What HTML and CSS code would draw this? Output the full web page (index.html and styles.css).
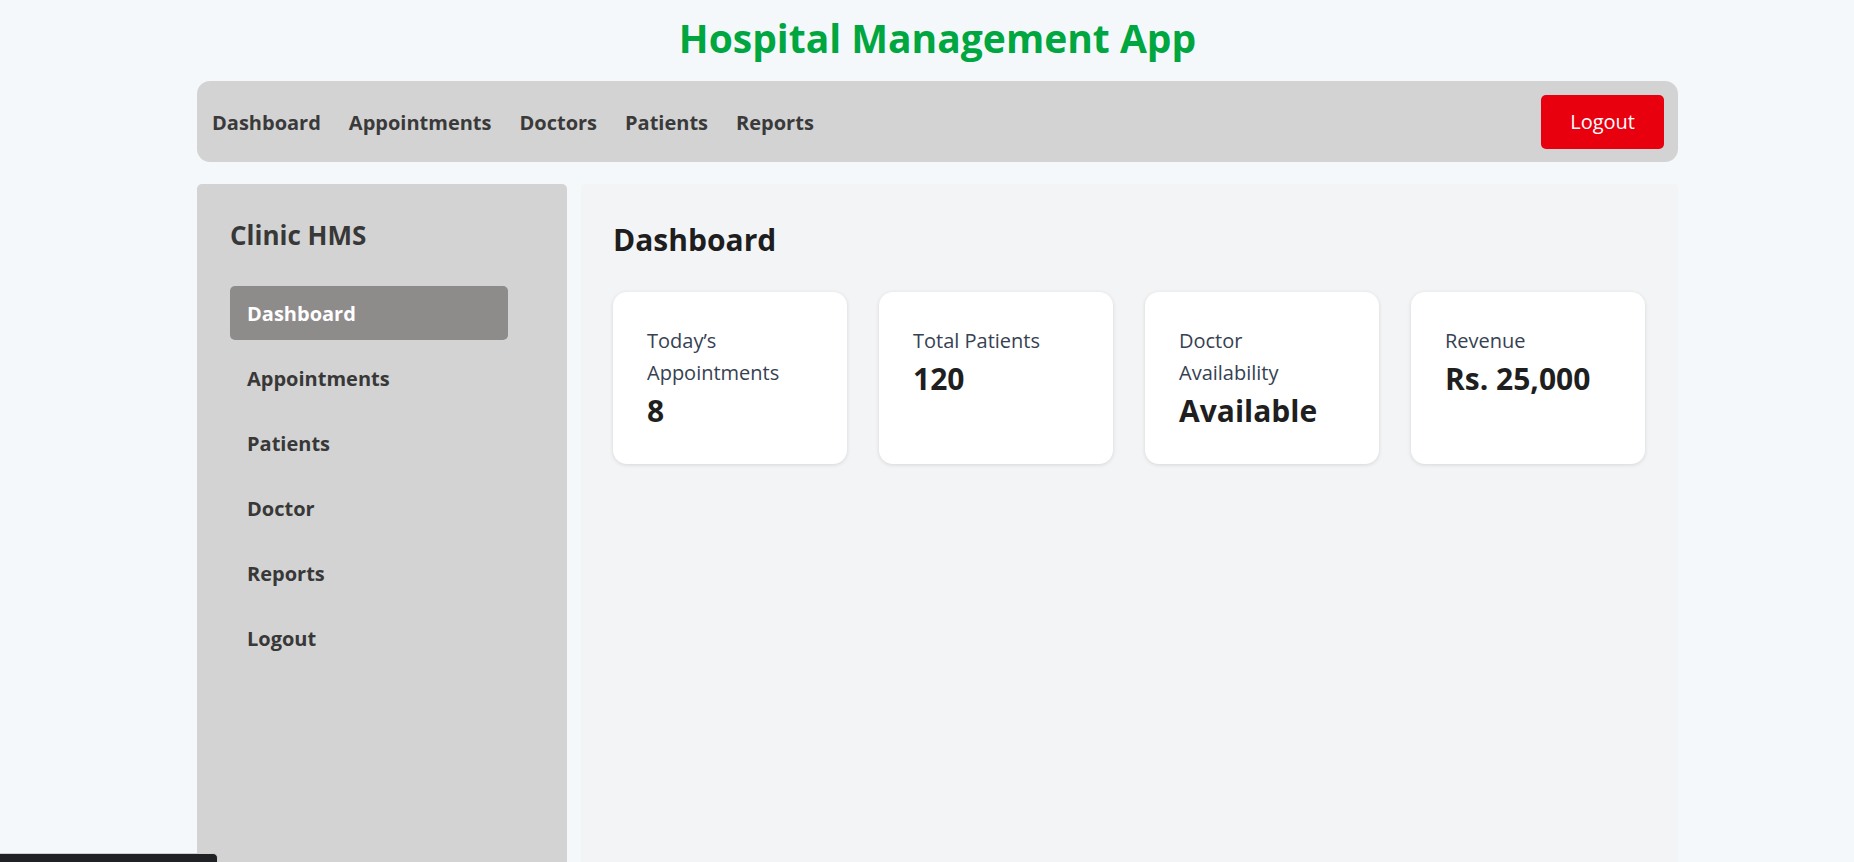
FILE: index.html
```html
<!DOCTYPE html>
<html lang="en">
<head>
<meta charset="utf-8">
<title>Hospital Management App</title>
<link rel="stylesheet" href="styles.css">
</head>
<body>
<div class="app">
  <h1 class="app-title">Hospital Management App</h1>
  <nav class="topbar">
    <div class="topbar-links">
      <a class="topbar-link" href="#">Dashboard</a>
      <a class="topbar-link" href="#">Appointments</a>
      <a class="topbar-link" href="#">Doctors</a>
      <a class="topbar-link" href="#">Patients</a>
      <a class="topbar-link" href="#">Reports</a>
    </div>
    <button class="logout-btn" type="button">Logout</button>
  </nav>
  <div class="layout">
    <aside class="sidebar">
      <h2 class="sidebar-title">Clinic HMS</h2>
      <ul class="side-menu">
        <li class="side-item active">Dashboard</li>
        <li class="side-item">Appointments</li>
        <li class="side-item">Patients</li>
        <li class="side-item">Doctor</li>
        <li class="side-item">Reports</li>
        <li class="side-item">Logout</li>
      </ul>
    </aside>
    <main class="main">
      <h1 class="page-title">Dashboard</h1>
      <div class="cards">
        <div class="card">
          <div class="card-label">Today’s Appointments</div>
          <div class="card-value">8</div>
        </div>
        <div class="card">
          <div class="card-label">Total Patients</div>
          <div class="card-value">120</div>
        </div>
        <div class="card">
          <div class="card-label">Doctor Availability</div>
          <div class="card-value">Available</div>
        </div>
        <div class="card">
          <div class="card-label">Revenue</div>
          <div class="card-value">Rs. 25,000</div>
        </div>
      </div>
    </main>
  </div>
</div>
<div class="status-bubble"></div>
</body>
</html>
```
FILE: styles.css
```css
html, body {
  margin: 0;
  padding: 0;
  height: 100%;
  overflow: hidden;
}

body {
  background: #f5f8fb;
  font-family: "Open Sans", "Noto Sans", "Liberation Sans", sans-serif;
  color: #333;
}

.app {
  width: 1481px;
  margin-left: 197px;
  height: 100vh;
  display: flex;
  flex-direction: column;
}

.app-title {
  margin: 11px 0 17px;
  font-size: 39px;
  line-height: 53px;
  font-weight: 700;
  color: #00a640;
  text-align: center;
}

.topbar {
  height: 81px;
  box-sizing: border-box;
  padding: 14px 14px 14px 15px;
  background: #d3d3d3;
  border-radius: 13px;
  display: flex;
  align-items: center;
  justify-content: space-between;
}

.topbar-links {
  display: flex;
  gap: 28px;
  padding-top: 2px;
}

.topbar-link {
  font-size: 20px;
  line-height: 28px;
  font-weight: 700;
  color: #3a3a3a;
  text-decoration: none;
}

.logout-btn {
  height: 54px;
  padding: 0 29px;
  border: none;
  border-radius: 5px;
  background: #e8000e;
  color: #fff;
  font-family: inherit;
  font-size: 20px;
  line-height: 28px;
}

.layout {
  flex: 1;
  display: flex;
  gap: 14px;
  margin-top: 22px;
  min-height: 0;
}

.sidebar {
  width: 370px;
  box-sizing: border-box;
  padding: 34px 33px;
  background: #d3d3d3;
  border-radius: 5px 5px 0 0;
}

.sidebar-title {
  margin: 0 0 34px;
  font-size: 26px;
  line-height: 34px;
  font-weight: 700;
  color: #383838;
}

.side-menu {
  list-style: none;
  margin: 0;
  padding: 0;
  width: 278px;
}

.side-item {
  padding: 14px 17px 12px;
  margin-bottom: 11px;
  font-size: 20px;
  line-height: 28px;
  font-weight: 700;
  color: #383838;
  border-radius: 5px;
}

.side-item.active {
  background: #8e8b8b;
  color: #fff;
}

.main {
  flex: 1;
  box-sizing: border-box;
  padding: 36px 32px 32px 32px;
  background: #f3f4f6;
  border-radius: 4px 4px 0 0;
}

.page-title {
  margin: 0 0 32px;
  font-size: 30px;
  line-height: 40px;
  font-weight: 700;
  color: #1e1e1e;
}

.cards {
  display: grid;
  grid-template-columns: repeat(4, 234px);
  gap: 32px;
}

.card {
  background: #fff;
  border-radius: 14px;
  padding: 33px 34px 31px;
  box-shadow: 0 1px 4px rgba(0, 0, 0, 0.12);
}

.card-label {
  font-size: 20px;
  line-height: 32px;
  color: #364152;
}

.card-value {
  font-size: 30px;
  line-height: 44px;
  font-weight: 700;
  color: #1f1f1f;
}

.status-bubble {
  position: fixed;
  left: 0;
  bottom: -4px;
  width: 217px;
  height: 11px;
  background: #202124;
  border: 1px solid #cfcfcf;
  border-left: none;
  border-radius: 0 5px 0 0;
}
```
